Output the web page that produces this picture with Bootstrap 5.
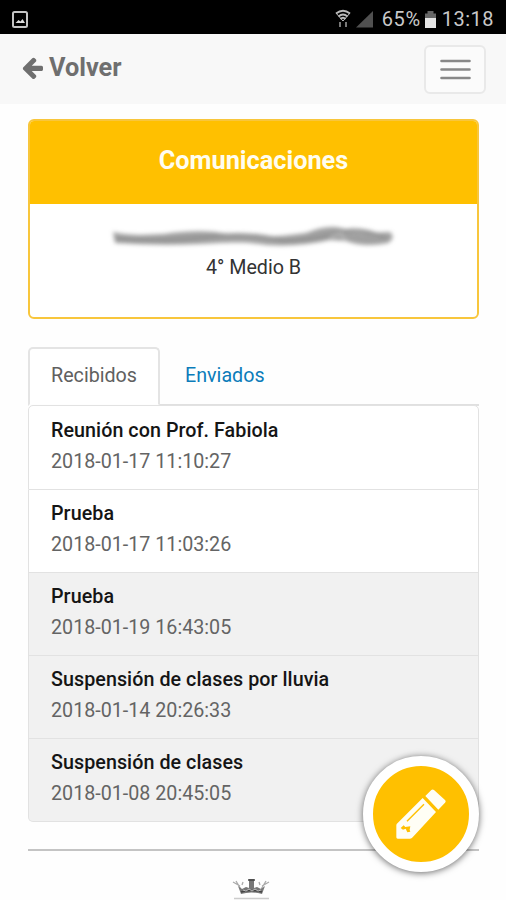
<!DOCTYPE html>
<html lang="es">
<head>
<meta charset="utf-8">
<meta name="viewport" content="width=device-width, initial-scale=1">
<title>Comunicaciones</title>
<link href="https://cdn.jsdelivr.net/npm/bootstrap@5.3.0/dist/css/bootstrap.min.css" rel="stylesheet">
<style>
body{font-family:Roboto,sans-serif;font-size:19.7px;line-height:31px;color:#333;background:#fefefe;height:900px;overflow:hidden}
.status-bar{height:34px;background:#000;color:#c9c9c9;padding:4px 12px 0 11px;font-size:20px}
.bar-pct{letter-spacing:.6px}
.bar-battery{margin:0 5px 0 3px}
.bar-time{letter-spacing:.5px}
.top-nav{height:70px;background:#f8f8f8;padding:0 20px 0 22px}
.back-link{color:#6f6f6f;font-size:25.3px;font-weight:700;line-height:30px;gap:6px;margin-bottom:2px}
.menu-btn{width:62px;height:49px;border:2px solid #e9e9e9;border-radius:6px;background:#fbfbfb}
.page-main{padding:15px 27px 0 28px}
.info-card{height:200px;border:2px solid #f8c63c;border-radius:6px;overflow:hidden;background:#fff}
.info-card .card-header{height:83px;background:#ffc000;color:#fffdf0;font-size:25.3px;font-weight:700;padding:0 0 4px}
.info-card .card-body{line-height:31px}
.course{padding-top:1px}
.tab-row{margin-top:28px;border-bottom:2px solid #e0e0e0;height:59px}
.tab-row .nav-link{height:59px;padding:11px 22px 0 23px;color:#0b7cba;border:2px solid transparent;border-radius:5px 5px 0 0}
.tab-row .nav-link.active{width:132px;padding-left:21px;color:#606060;border-color:#e4e4e4 #e4e4e4 #fefefe}
.msg-list{--bs-list-group-border-color:#e2e2e2;border-radius:5px;margin-top:-1px}
.msg-list .list-group-item{height:83px;padding:8px 22px 0;color:#646464}
.msg-list .list-group-item:first-child{height:85px;padding-top:9px}
.msg-list .is-read{background:#f1f1f1}
.msg-title{color:#151515;font-weight:500;letter-spacing:.06px}
.end-rule{height:2px;background:#c4c4c4;margin-top:27px}
.crown{margin-left:-5px}
.compose-btn{left:363px;top:756px;width:116px;height:116px;border:10px solid #fff;background:#ffc000;box-shadow:0 1px 7px rgba(0,0,0,.6);z-index:5}
</style>
</head>
<body>
<div class="status-bar d-flex align-items-center">
  <svg width="18" height="19" viewBox="0 0 18 19" fill="none"><rect x="2" y="2" width="14" height="15" rx="1.500" stroke="#c4c4c4" stroke-width="2"/><path d="M4.500 13l3-3 2 1.500 2-2.500 2.500 4z" fill="#ddd"/></svg>
  <svg class="ms-auto" width="39" height="20" viewBox="0 0 39 20" fill="none"><g stroke="#bbb" stroke-width="1.800"><path d="M1 4.500q7-5.500 14 0M3.500 7.500q4.500-4 9 0M5.500 10q2.500-2.500 5 0"/><path d="M1 4l7 8 7-8" stroke-width="1"/></g><path d="M5 13v5M11 13v5" stroke="#777" stroke-width="2"/><path d="M21 18.500L38 2v16.500z" fill="#505050"/></svg>
  <span class="bar-pct ms-1 ps-1">65%</span>
  <svg class="bar-battery" width="13" height="19" viewBox="0 0 13 19"><path d="M3.500 1h6v2.500H12V8H1V3.500h2.500z" fill="#666"/><path d="M1 8h11v10H1z" fill="#e4e4e4"/></svg>
  <span class="bar-time">13:18</span>
</div>
<nav class="top-nav d-flex align-items-center justify-content-between">
  <a class="back-link d-flex align-items-center text-decoration-none" href="#">
    <svg width="21" height="23" viewBox="0 140 1536 1570" fill="#6f6f6f"><path d="M1536 896v128q0 53-32.500 90.500t-84.500 37.500h-704l293 294q38 36 38 90t-38 90l-75 76q-37 37-90 37-52 0-91-37l-651-652q-37-37-37-90 0-52 37-91l651-650q38-38 91-38 52 0 90 38l75 74q38 38 38 91t-38 91l-293 293h704q52 0 84.500 37.500t32.500 90.500z" transform="translate(0 -40)"/></svg>
    <span>Volver</span>
  </a>
  <button class="menu-btn btn p-0 d-flex align-items-center justify-content-center" type="button" aria-label="Menú">
    <svg width="31" height="21" viewBox="0 0 31 21" stroke="#888" stroke-width="2.600" stroke-linecap="round"><path d="M1.500 2h28M1.500 10.500h28M1.500 19h28"/></svg>
  </button>
</nav>
<main class="page-main">
  <section class="info-card card text-center">
    <div class="card-header d-flex align-items-center justify-content-center border-0 rounded-0"><span class="card-name">Comunicaciones</span></div>
    <div class="card-body p-0 pt-3">
      <svg class="d-block mx-auto mb-0" width="300" height="31" viewBox="0 0 300 31" fill="none">
        <defs><filter id="soft" x="-5%" y="-50%" width="110%" height="200%"><feGaussianBlur stdDeviation="2"/></filter></defs>
        <g filter="url(#soft)"><path d="M9 12C26 16 42 15 60 14Q88 10 111 12C142 18 169 18 202 13Q228 2 245 11Q263 14 286 12Q292 18 284 23Q260 28 242 21L226 20Q195 27 163 25C136 21 121 23 95 24Q56 26 11 23Z" fill="#a0a0a0"/><path d="M12 19Q60 23 103 17T180 21Q210 21 232 13T282 18" stroke="#909090" stroke-width="3"/><path d="M226 17l11-4 4 7" stroke="#bbb" stroke-width="2"/></g>
      </svg>
      <div class="course">4° Medio B</div>
    </div>
  </section>
  <ul class="tab-row nav nav-tabs flex-nowrap">
    <li class="nav-item"><a class="nav-link active" href="#"><span>Recibidos</span></a></li>
    <li class="nav-item"><a class="nav-link" href="#"><span>Enviados</span></a></li>
  </ul>
  <div class="msg-list list-group">
    <a class="list-group-item" href="#"><div class="msg-title">Reunión con Prof. Fabiola</div><div class="msg-date">2018-01-17 11:10:27</div></a>
    <a class="list-group-item" href="#"><div class="msg-title">Prueba</div><div class="msg-date">2018-01-17 11:03:26</div></a>
    <a class="list-group-item is-read" href="#"><div class="msg-title">Prueba</div><div class="msg-date">2018-01-19 16:43:05</div></a>
    <a class="list-group-item is-read" href="#"><div class="msg-title">Suspensión de clases por lluvia</div><div class="msg-date">2018-01-14 20:26:33</div></a>
    <a class="list-group-item is-read" href="#"><div class="msg-title">Suspensión de clases</div><div class="msg-date">2018-01-08 20:45:05</div></a>
  </div>
  <div class="end-rule"></div>
  <footer class="d-flex justify-content-center pt-4">
    <svg class="crown" width="40" height="26" viewBox="0 0 40 26" fill="none"><path d="M2 7l7 4M38 7l-7 4M5 6l6 10M35 6l-6 10M11 10l1-3M29 10l-1-3" stroke="#aaa" stroke-width="1.300"/><path d="M7 11l4 3 4-2 3 1V4h5v9l3-1 4 2 4-3-3 8q-11-3-21 0z" fill="#777"/><path d="M17 5h7M10 17q10-3 21 0" stroke="#444" stroke-width="1.500"/><path d="M12 15l3 1 3-2 3 2 3-2 3 2 3-1" stroke="#bbb" stroke-width="1"/><path d="M3 23.500h35" stroke="#ccc" stroke-width="1.500"/></svg>
  </footer>
</main>
<button class="compose-btn btn rounded-circle position-absolute p-0 d-flex align-items-center justify-content-center" type="button" aria-label="Redactar">
  <svg width="50" height="50" viewBox="138 149 150 150" fill="#fffef5"><path d="M244 152q4-3 8 0l33 30q4 4 0 8l-20 21-39-41zM218 176l40 42-70 76q-3 4-8 4h-37q-4 0-4-4v-36q0-4 4-7z"/><path d="M171 246l51-51" stroke="#ffc000" stroke-width="4"/><path d="M152 266l9-8 5 5 15-2-2 10 2 6-9 2-5-11-8 3z" fill="#ffc000"/></svg>
</button>
<script src="https://cdn.jsdelivr.net/npm/bootstrap@5.3.0/dist/js/bootstrap.bundle.min.js"></script>
</body>
</html>
